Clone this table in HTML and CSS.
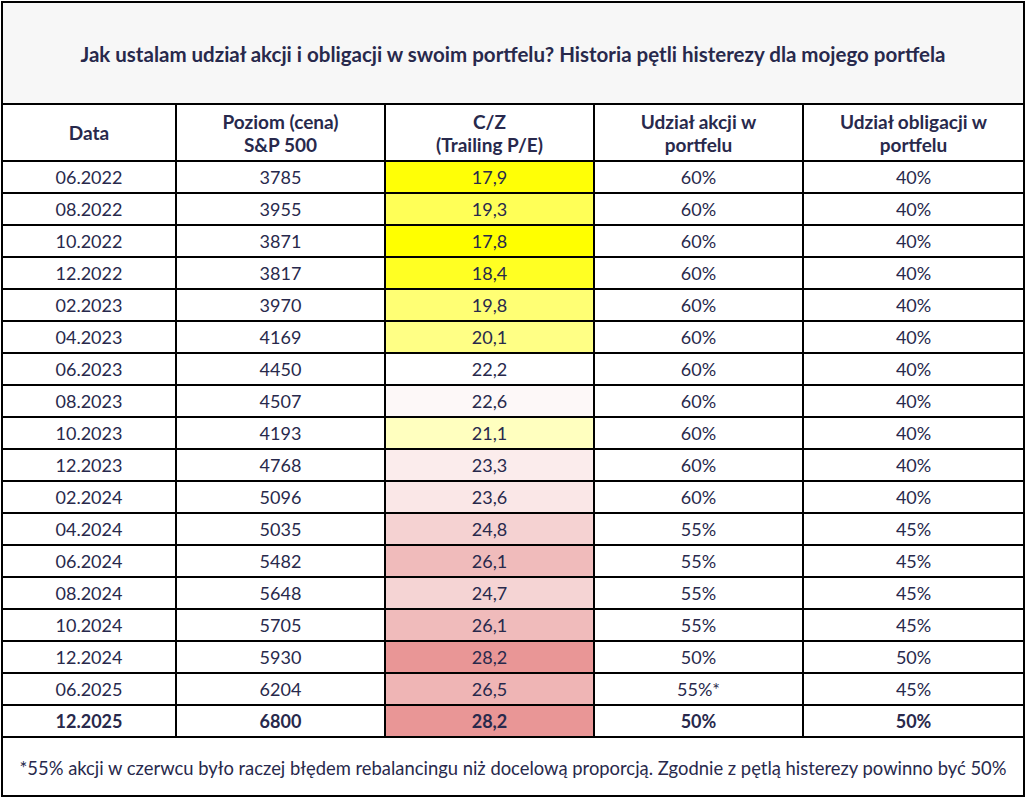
FILE: index.html
```html
<!DOCTYPE html>
<html lang="pl">
<head>
<meta charset="utf-8">
<title>Historia pętli histerezy</title>
<link rel="stylesheet" href="styles.css">
</head>
<body>
<div class="wrap">
<table class="sheet">
  <colgroup>
    <col class="c-date"><col class="c-price"><col class="c-pe"><col class="c-stock"><col class="c-bond">
  </colgroup>
  <thead>
    <tr class="title-row"><th colspan="5">Jak ustalam udział akcji i obligacji w swoim portfelu? Historia pętli histerezy dla mojego portfela</th></tr>
    <tr class="head-row">
      <th>Data</th>
      <th>Poziom (cena)<br>S&amp;P 500</th>
      <th>C/Z<br>(Trailing P/E)</th>
      <th>Udział akcji w<br>portfelu</th>
      <th>Udział obligacji w<br>portfelu</th>
    </tr>
  </thead>
  <tbody>
    <tr><td>06.2022</td><td>3785</td><td class="pe" style="background:#FFFF06">17,9</td><td>60%</td><td>40%</td></tr>
    <tr><td>08.2022</td><td>3955</td><td class="pe" style="background:#FFFF57">19,3</td><td>60%</td><td>40%</td></tr>
    <tr><td>10.2022</td><td>3871</td><td class="pe" style="background:#FFFF00">17,8</td><td>60%</td><td>40%</td></tr>
    <tr><td>12.2022</td><td>3817</td><td class="pe" style="background:#FFFF23">18,4</td><td>60%</td><td>40%</td></tr>
    <tr><td>02.2023</td><td>3970</td><td class="pe" style="background:#FFFF74">19,8</td><td>60%</td><td>40%</td></tr>
    <tr><td>04.2023</td><td>4169</td><td class="pe" style="background:#FFFF85">20,1</td><td>60%</td><td>40%</td></tr>
    <tr><td>06.2023</td><td>4450</td><td class="pe" style="background:#FFFFFF">22,2</td><td>60%</td><td>40%</td></tr>
    <tr><td>08.2023</td><td>4507</td><td class="pe" style="background:#FDF8F8">22,6</td><td>60%</td><td>40%</td></tr>
    <tr><td>10.2023</td><td>4193</td><td class="pe" style="background:#FFFFBF">21,1</td><td>60%</td><td>40%</td></tr>
    <tr><td>12.2023</td><td>4768</td><td class="pe" style="background:#FBECEC">23,3</td><td>60%</td><td>40%</td></tr>
    <tr><td>02.2024</td><td>5096</td><td class="pe" style="background:#FAE7E7">23,6</td><td>60%</td><td>40%</td></tr>
    <tr><td>04.2024</td><td>5035</td><td class="pe" style="background:#F5D2D2">24,8</td><td>55%</td><td>45%</td></tr>
    <tr><td>06.2024</td><td>5482</td><td class="pe" style="background:#F0BBBB">26,1</td><td>55%</td><td>45%</td></tr>
    <tr><td>08.2024</td><td>5648</td><td class="pe" style="background:#F5D4D4">24,7</td><td>55%</td><td>45%</td></tr>
    <tr><td>10.2024</td><td>5705</td><td class="pe" style="background:#F0BBBB">26,1</td><td>55%</td><td>45%</td></tr>
    <tr><td>12.2024</td><td>5930</td><td class="pe" style="background:#E99696">28,2</td><td>50%</td><td>50%</td></tr>
    <tr><td>06.2025</td><td>6204</td><td class="pe" style="background:#EFB5B5">26,5</td><td>55%*</td><td>45%</td></tr>
    <tr class="bold-row"><td>12.2025</td><td>6800</td><td class="pe" style="background:#E99696">28,2</td><td>50%</td><td>50%</td></tr>
  </tbody>
  <tfoot>
    <tr class="note-row"><td colspan="5">*55% akcji w czerwcu było raczej błędem rebalancingu niż docelową proporcją. Zgodnie z pętlą histerezy powinno być 50%</td></tr>
  </tfoot>
</table>
</div>
</body>
</html>
```

FILE: styles.css
```css
html, body {
  margin: 0;
  padding: 0;
  background: #ffffff;
}

.wrap {
  padding: 1px 2px 0 1px;
}

.sheet {
  border-collapse: collapse;
  table-layout: fixed;
  width: 1024px;
  font-family: Lato, "Open Sans", sans-serif;
  color: #28294c;
  font-size: 18px;
}

.c-date { width: 174px; }
.c-price { width: 209px; }
.c-pe { width: 209px; }
.c-stock { width: 209px; }
.c-bond { width: 221px; }

.sheet th,
.sheet td {
  border: 2px solid #000000;
  padding: 0;
  text-align: center;
  vertical-align: middle;
  white-space: nowrap;
}

.title-row th {
  background: #f7f7f7;
  height: 98px;
  padding-top: 2px;
  font-size: 20.5px;
  font-weight: 700;
}

.head-row th {
  height: 55px;
  font-size: 19px;
  font-weight: 700;
  line-height: 23px;
}

tbody td {
  height: 30px;
  padding-top: 2px;
  line-height: 20px;
}

.bold-row td {
  font-weight: 700;
}

.note-row td {
  height: 54px;
  padding-top: 3px;
  font-size: 18.4px;
  overflow: visible;
}
```
